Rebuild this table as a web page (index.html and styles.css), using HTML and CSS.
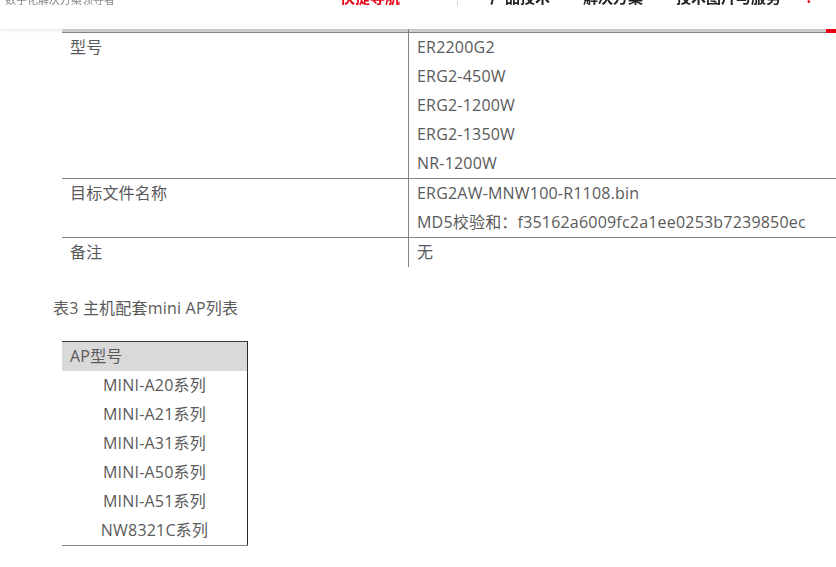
FILE: index.html
```html
<!DOCTYPE html>
<html lang="zh-CN">
<head>
<meta charset="utf-8">
<title>主机配套</title>
<link rel="stylesheet" href="styles.css">
</head>
<body>
<header class="topbar">
  <div class="topbar-inner">
    <span class="slogan">数字化解决方案领导者</span>
    <nav class="nav">
      <a class="nav-quick">快捷导航</a>
      <span class="nav-sep"></span>
      <a class="nav-item">产品技术</a>
      <a class="nav-item">解决方案</a>
      <a class="nav-item">技术图片与服务</a>
      <a class="nav-red">!</a>
    </nav>
  </div>
</header>
<span class="side-tab"></span>

<main class="content">
  <table class="spec">
    <tr class="cut-row"><td></td><td></td></tr>
    <tr>
      <td class="key">型号</td>
      <td class="val">ER2200G2<br>ERG2-450W<br>ERG2-1200W<br>ERG2-1350W<br>NR-1200W</td>
    </tr>
    <tr>
      <td class="key">目标文件名称</td>
      <td class="val">ERG2AW-MNW100-R1108.bin<br>MD5校验和：f35162a6009fc2a1ee0253b7239850ec</td>
    </tr>
    <tr class="last">
      <td class="key">备注</td>
      <td class="val">无</td>
    </tr>
  </table>

  <p class="caption">表3 主机配套mini AP列表</p>

  <table class="ap">
    <tr><th>AP型号</th></tr>
    <tr><td>MINI-A20系列</td></tr>
    <tr><td>MINI-A21系列</td></tr>
    <tr><td>MINI-A31系列</td></tr>
    <tr><td>MINI-A50系列</td></tr>
    <tr><td>MINI-A51系列</td></tr>
    <tr class="end"><td>NW8321C系列</td></tr>
  </table>
</main>
</body>
</html>
```

FILE: styles.css
```css
html, body {
  margin: 0;
  padding: 0;
  background: #fff;
}
body {
  font-family: "Open Sans", "Noto Sans CJK SC", sans-serif;
  color: #5a5a5a;
  font-size: 16px;
  letter-spacing: 0.2px;
  overflow: hidden;
}

.topbar {
  position: fixed;
  top: 0;
  left: 0;
  right: 0;
  height: 29px;
  background: #fff;
  overflow: hidden;
  z-index: 10;
  box-shadow: 0 2px 3px rgba(0, 0, 0, 0.08);
}
.topbar-inner {
  display: flex;
  align-items: flex-end;
  height: 17px;
  margin-top: -11px;
  padding-left: 5px;
  font-family: "Noto Sans CJK SC", sans-serif;
  letter-spacing: 0;
}
.slogan {
  font-size: 11px;
  line-height: 14px;
  color: #8a8a8a;
  width: 335px;
}
.nav {
  display: flex;
  align-items: flex-end;
  flex: 1;
}
.nav a {
  font-size: 15px;
  line-height: 18px;
  font-weight: bold;
  white-space: nowrap;
}
.nav-quick {
  color: #e60012;
  width: 117px;
}
.nav-sep {
  width: 1px;
  height: 14px;
  background: #d8d8d8;
  margin-right: 32px;
}
.nav-item {
  color: #222;
  margin-right: 33px;
}
.nav-red {
  color: #e60012;
  margin-left: -8px;
}

.side-tab {
  position: fixed;
  top: 29px;
  right: 0;
  width: 10px;
  height: 4px;
  background: #e60012;
  z-index: 11;
}

.content {
  padding: 29px 0 0 0;
}

.spec {
  border-collapse: collapse;
  margin-left: 62px;
  width: 800px;
}
.spec td {
  padding: 0 8px;
  line-height: 29px;
  height: 29px;
  vertical-align: top;
  border-top: 1px solid #858585;
}
.spec td.key {
  width: 330px;
  border-right: 1px solid #858585;
}
.spec tr.cut-row td {
  height: 3px;
  padding: 0;
  line-height: 0;
  border-top: 0;
  background: #d6d6d6;
}
.spec tr.cut-row td:first-child {
  border-right: 1px solid #858585;
  width: 346px;
}
.spec td.val {
  white-space: nowrap;
}

.caption {
  margin: 26px 0 0 53px;
  line-height: 30px;
}

.ap {
  border-collapse: collapse;
  margin: 18px 0 0 62px;
  width: 186px;
}
.ap th {
  background: #d9d9d9;
  font-weight: normal;
  text-align: left;
  padding: 0 8px;
  line-height: 29px;
  border-top: 1px solid #3a3a3a;
  border-right: 1px solid #2a2a2a;
}
.ap td {
  text-align: center;
  padding: 0;
  line-height: 29px;
  border-right: 1px solid #2a2a2a;
}
.ap tr.end td {
  border-bottom: 1px solid #858585;
}
```
